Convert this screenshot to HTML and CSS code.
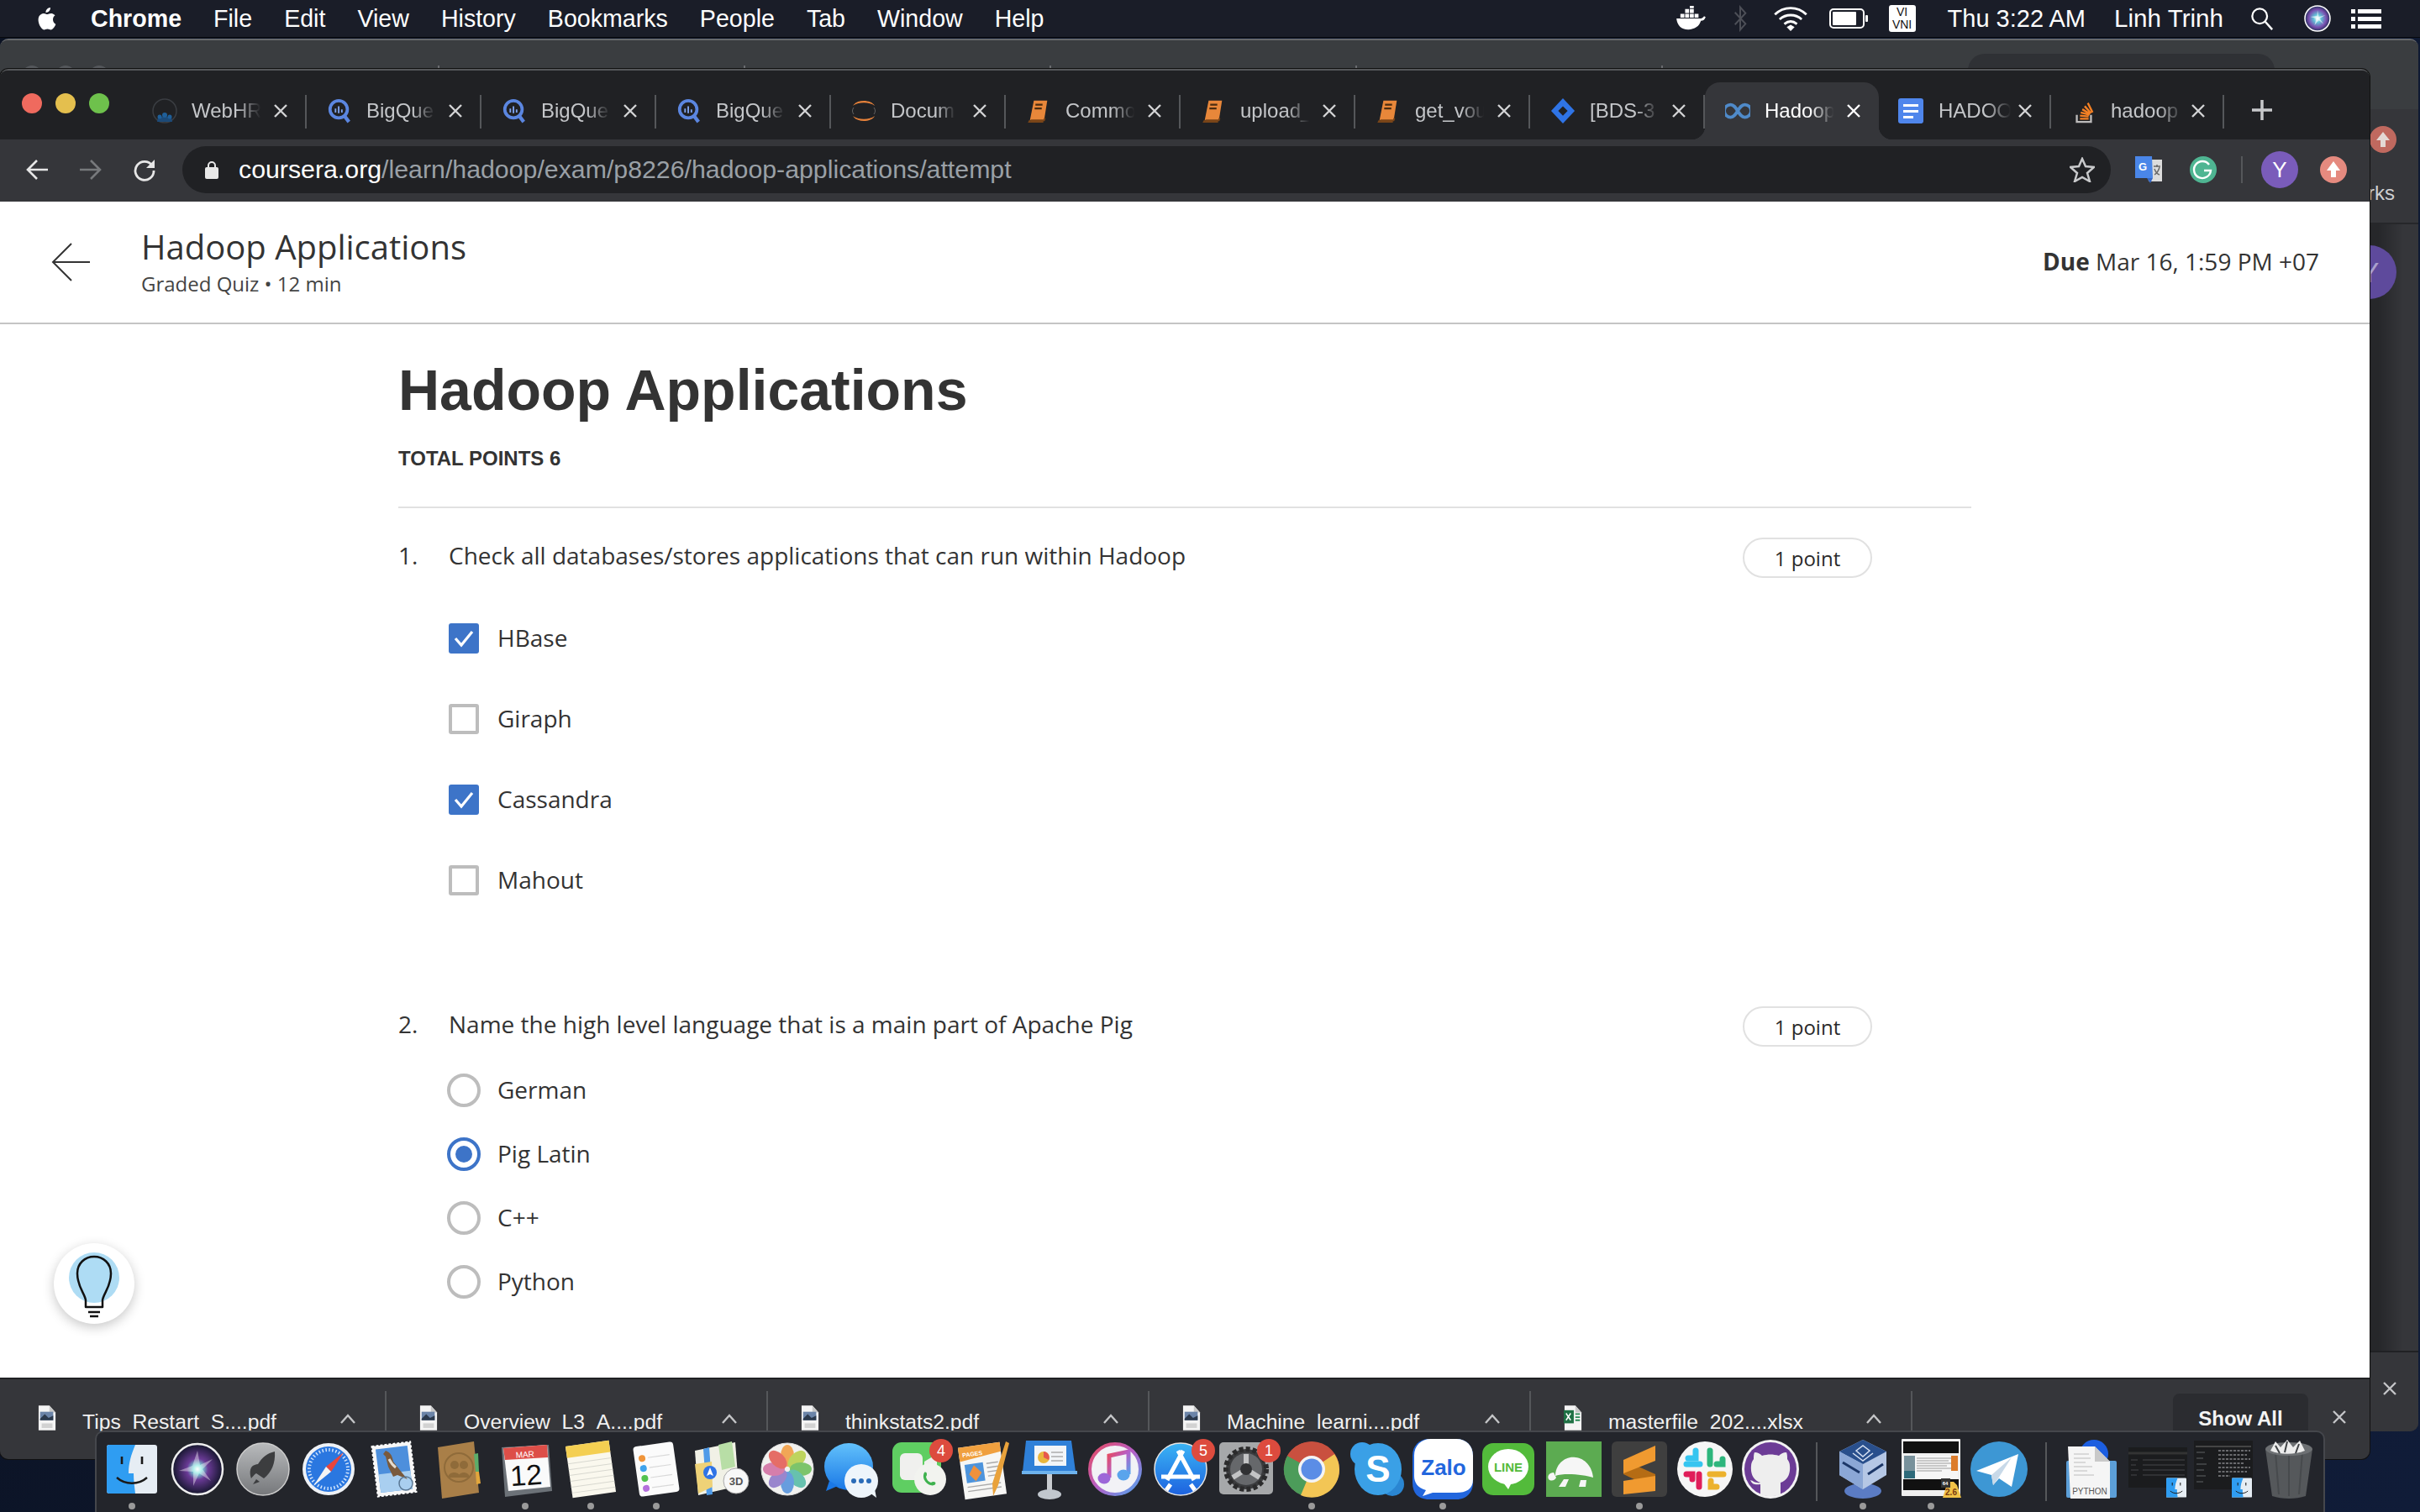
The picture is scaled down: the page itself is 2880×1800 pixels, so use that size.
FILE: index.html
```html
<!DOCTYPE html>
<html lang="en">
<head>
<meta charset="utf-8">
<title>Hadoop Applications</title>
<link rel="stylesheet" href="styles.css">
</head>
<body>
<svg class="defs" width="0" height="0" aria-hidden="true">
  <symbol id="x" viewBox="0 0 18 18"><path d="M2 2L16 16M16 2L2 16" fill="none" stroke="currentColor" stroke-width="2.4"/></symbol>
  <symbol id="bq" viewBox="0 0 30 32"><circle cx="14" cy="14" r="11" fill="none" stroke="#5b86e0" stroke-width="4"/><path d="M21 22l6 8" stroke="#5b86e0" stroke-width="4.5"/><path d="M10 13v5M14 10v9M18 14v4" stroke="#7fa3ee" stroke-width="2"/></symbol>
  <symbol id="book" viewBox="0 0 30 32"><path d="M9 3h17l-4 25H4z" fill="#e8873a"/><path d="M5 28h17l1-3M4 28l-1 2h18" fill="none" stroke="#7a4518" stroke-width="2"/><path d="M11 8h9M10 13h9" stroke="#4a2c10" stroke-width="2.4"/></symbol>
  <symbol id="pdf" viewBox="0 0 24 32"><path d="M1 0h14l8 9v23H1z" fill="#f4f4f4"/><path d="M15 0v9h8z" fill="#c9c9c9"/><rect x="3" y="8" width="17" height="11" fill="#6b84a8"/><path d="M3 17l6-6 5 5 6-3v6H3z" fill="#2c3a4d"/><path d="M5 23h14v6H5z" fill="#d2d2d2"/></symbol>
  <symbol id="finder" viewBox="0 0 60 58"><rect width="60" height="58" rx="3" fill="#e6edf4"/><path d="M3 0h31c-5 12-8 22-8 34h6c0 8 1 16 2 24H3a3 3 0 0 1-3-3V3a3 3 0 0 1 3-3z" fill="#2f9df2"/><path d="M18 14v9M42 14v9" stroke="#1a1a1a" stroke-width="2.6"/><path d="M12 39c10 9 26 9 36 0" fill="none" stroke="#1a1a1a" stroke-width="2.4"/></symbol>
</svg>

<div class="desktop">

  <header class="menubar">
    <svg class="apple" viewBox="0 0 26 30"><path d="M18 2c.3 3-2.500 6-5.500 6-.4-3 2.500-6 5.500-6zM21 16c0-3 2.300-4.500 2.500-4.700-1.500-2-3.700-2.400-4.500-2.400-2-.2-3.800 1.200-4.800 1.200s-2.500-1.200-4.200-1.200c-2.200 0-4.200 1.300-5.300 3.200-2.300 3.900-.6 9.800 1.600 13 1.100 1.600 2.400 3.300 4 3.300 1.600-.1 2.200-1 4.200-1 1.900 0 2.500 1 4.200 1s2.800-1.600 3.900-3.100c1.200-1.800 1.700-3.500 1.800-3.600-.1 0-3.400-1.300-3.400-5.700z" fill="#fff"/></svg>
    <nav class="menu">
      <span class="menu-app">Chrome</span><span>File</span><span>Edit</span><span>View</span><span>History</span><span>Bookmarks</span><span>People</span><span>Tab</span><span>Window</span><span>Help</span>
    </nav>
    <div class="status">
      <svg class="st st-docker" viewBox="0 0 38 32"><path d="M1 16h30c2 0 4-1 5-3l2 1c-1 3-3 5-6 5-2 7-8 11-16 11C7 30 2 25 1 16z" fill="#fff"/><path d="M6 10h5v5H6zM12 10h5v5h-5zM18 10h5v5h-5zM24 10h5v5h-5zM12 4h5v5h-5zM18 4h5v5h-5zM18 0h5v3h-5z" fill="#fff"/></svg>
      <svg class="st st-bt" viewBox="0 0 20 34"><path d="M3 9l14 15-7 8V2l7 8L3 25" fill="none" stroke="#4d4f57" stroke-width="2.200"/></svg>
      <svg class="st st-wifi" viewBox="0 0 44 32"><path d="M2 11c11-11 29-11 40 0M8 17c8-7 20-7 28 0M14 23c5-4 11-4 16 0" fill="none" stroke="#fff" stroke-width="3"/><path d="M17 27l5-3 5 3-5 5z" fill="#fff"/></svg>
      <svg class="st st-batt" viewBox="0 0 46 24"><rect x="1" y="1" width="40" height="22" rx="4" fill="none" stroke="#fff" stroke-width="2"/><rect x="4" y="4" width="28" height="16" rx="1" fill="#fff"/><rect x="43" y="8" width="3" height="8" rx="1" fill="#fff"/></svg>
      <div class="vi"><span>VI</span><span>VNI</span></div>
      <span class="clock">Thu 3:22 AM</span>
      <span class="user">Linh Trinh</span>
      <svg class="st st-search" viewBox="0 0 30 30"><circle cx="12" cy="12" r="9.500" fill="none" stroke="#fff" stroke-width="2.400"/><path d="M19 19l9 10" stroke="#fff" stroke-width="2.600"/></svg>
      <svg class="st st-siri" viewBox="0 0 32 32"><defs><radialGradient id="sr"><stop offset="0" stop-color="#fff"/><stop offset=".3" stop-color="#62c3d8"/><stop offset=".7" stop-color="#7a4fb0"/><stop offset="1" stop-color="#25315c"/></radialGradient></defs><circle cx="16" cy="16" r="15" fill="url(#sr)" stroke="#fff" stroke-width="1.500"/><path d="M16 6l1.500 8 8-2-7 4 5 7-6-5-5 6 2-8-7-2 8-1z" fill="#fff" opacity=".6"/></svg>
      <svg class="st st-list" viewBox="0 0 36 24"><path d="M0 1h5v5H0zM8 1h28v5H8zM0 10h5v5H0zM8 10h28v5H8zM0 19h5v5H0zM8 19h28v5H8z" fill="#fff"/></svg>
    </div>
  </header>

  <section class="win win-back">
    <div class="bk-strip">
      <div class="bk-lights"><i></i><i></i><i></i></div>
      <div class="bk-tab"></div><div class="bk-tab"></div><div class="bk-tab"></div><div class="bk-tab"></div><div class="bk-tab"></div>
      <div class="bk-active"></div>
    </div>
    <div class="bk-tool"><svg class="bk-up" viewBox="0 0 32 32"><circle cx="16" cy="16" r="16" fill="#c0695f"/><path d="M16 7l8 10h-5v8h-6v-8H8z" fill="#e4d8d4"/></svg></div>
    <div class="bk-marks"><span>Bookmarks</span></div>
    <div class="bk-page"><div class="bk-avatar">Y</div></div>
    <div class="bk-dl"><svg class="close-x bk-x"><use href="#x"/></svg></div>
  </section>

  <section class="win win-front">
    <div class="strip">
      <div class="lights"><i class="l-r"></i><i class="l-y"></i><i class="l-g"></i></div>
      <div class="tab">
        <svg class="fav" viewBox="0 0 30 30"><circle cx="15" cy="15" r="14" fill="none" stroke="#3a3d42" stroke-width="1.500"/><path d="M7 22h16l1 6H6z" fill="#1c4a78"/><circle cx="15" cy="20" r="3" fill="#1f5f99"/><circle cx="9" cy="22" r="2.500" fill="#1f5f99"/><circle cx="21" cy="22" r="2.500" fill="#1f5f99"/></svg>
        <span class="tab-t">WebHR</span><svg class="close-x"><use href="#x"/></svg>
      </div>
      <div class="tab"><svg class="fav"><use href="#bq"/></svg><span class="tab-t">BigQue</span><svg class="close-x"><use href="#x"/></svg></div>
      <div class="tab"><svg class="fav"><use href="#bq"/></svg><span class="tab-t">BigQue</span><svg class="close-x"><use href="#x"/></svg></div>
      <div class="tab"><svg class="fav"><use href="#bq"/></svg><span class="tab-t">BigQue</span><svg class="close-x"><use href="#x"/></svg></div>
      <div class="tab"><svg class="fav" viewBox="0 0 30 30"><path d="M2 9C6 1 24 1 28 9 22 4 8 4 2 9z" fill="#e5813a"/><path d="M2 21c4 8 22 8 26 0-6 5-20 5-26 0z" fill="#e5813a"/><path d="M3 11c-2 3-2 5 0 8M27 11c2 3 2 5 0 8" fill="none" stroke="#666" stroke-width="1"/></svg><span class="tab-t tab-t-n">Docum</span><svg class="close-x"><use href="#x"/></svg></div>
      <div class="tab"><svg class="fav"><use href="#book"/></svg><span class="tab-t">Commo</span><svg class="close-x"><use href="#x"/></svg></div>
      <div class="tab"><svg class="fav"><use href="#book"/></svg><span class="tab-t">upload_</span><svg class="close-x"><use href="#x"/></svg></div>
      <div class="tab"><svg class="fav"><use href="#book"/></svg><span class="tab-t">get_vou</span><svg class="close-x"><use href="#x"/></svg></div>
      <div class="tab"><svg class="fav" viewBox="0 0 30 32"><path d="M15 0l15 16-15 16L0 16z" fill="#2f74e6"/><path d="M15 10l6 6-6 6-6-6z" fill="#202124"/></svg><span class="tab-t">[BDS-3</span><svg class="close-x"><use href="#x"/></svg></div>
      <div class="tab tab-on"><svg class="fav" viewBox="0 0 32 20"><path d="M16 10c-3-5-5-8-9-8a8 8 0 0 0 0 16c4 0 6-3 9-8 3-5 5-8 9-8a8 8 0 0 1 0 16c-4 0-6-3-9-8z" fill="none" stroke="#4f8ac9" stroke-width="4"/></svg><span class="tab-t">Hadoop</span><svg class="close-x"><use href="#x"/></svg></div>
      <div class="tab tab-s tab-a"><svg class="fav" viewBox="0 0 30 30"><rect width="30" height="30" rx="3" fill="#4f86ec"/><path d="M6 7h18v3H6zM6 14h18v3H6zM6 21h12v3H6z" fill="#fff"/></svg><span class="tab-t">HADOO</span><svg class="close-x"><use href="#x"/></svg></div>
      <div class="tab tab-s tab-b"><svg class="fav" viewBox="0 0 30 32"><path d="M6 21v9h18v-9" fill="none" stroke="#bcbbbb" stroke-width="2.500"/><path d="M10 26h11M10 22l11 1M11 18l11 3M13 14l10 6M16 10l8 9M20 6l6 12" stroke="#f48024" stroke-width="2.500"/></svg><span class="tab-t">hadoop</span><svg class="close-x"><use href="#x"/></svg></div>
      <svg class="plus" viewBox="0 0 26 26"><path d="M13 1v24M1 13h24" stroke="#c8c9cb" stroke-width="3.500"/></svg>
    </div>

    <div class="toolbar">
      <svg class="nav-i" viewBox="0 0 28 28"><path d="M14 3L3 14l11 11M3 14h24" fill="none" stroke="#e6e6e6" stroke-width="2.600"/></svg>
      <svg class="nav-i nav-fwd" viewBox="0 0 28 28"><path d="M14 3l11 11-11 11M25 14H1" fill="none" stroke="#77797c" stroke-width="2.600"/></svg>
      <svg class="nav-i nav-rl" viewBox="0 0 28 28"><path d="M23 9A11 11 0 1 0 25 15" fill="none" stroke="#e6e6e6" stroke-width="2.800"/><path d="M26 2v10H16z" fill="#e6e6e6"/></svg>
      <div class="omni">
        <svg class="lock" viewBox="0 0 16 22"><path d="M4 9V6a4 4 0 0 1 8 0v3" fill="none" stroke="#e8e8e8" stroke-width="2"/><rect y="8" width="16" height="14" rx="2" fill="#e8e8e8"/></svg>
        <span class="url"><b>coursera.org</b>/learn/hadoop/exam/p8226/hadoop-applications/attempt</span>
        <svg class="star" viewBox="0 0 30 30"><path d="M15 2l4 9 10 1-8 7 3 10-9-5-9 5 3-10-8-7 10-1z" fill="none" stroke="#c8c9cb" stroke-width="2.500"/></svg>
      </div>
      <svg class="ext ext-tr" viewBox="0 0 32 32"><path d="M14 4h18v26H16z" fill="#dcdcdc"/><path d="M0 0h20l1 26H0z" fill="#4a86e8"/><path d="M14 26h7l-3 6z" fill="#3367c6"/><text x="9" y="17" class="ext-g">G</text><path d="M22 12h8M26 10v3M23 22c3-2 5-5 6-9M23 15c1 3 3 6 6 7" fill="none" stroke="#6a6a6a" stroke-width="1.500"/></svg>
      <div class="ext-c ext-gr"><svg viewBox="0 0 32 32"><path d="M23 10a10 10 0 1 0 2 7h-8" fill="none" stroke="#fff" stroke-width="2.400"/></svg></div>
      <i class="ext-sep"></i>
      <div class="avatar">Y</div>
      <div class="ext-c ext-up"><svg viewBox="0 0 32 32"><path d="M16 6l8 11h-5v8h-6v-8H8z" fill="#fff"/></svg></div>
    </div>

    <main class="page">
      <div class="page-head">
        <svg class="back" viewBox="0 0 46 46"><path d="M24 1L2 23l22 22M2 23h44" fill="none" stroke="#333" stroke-width="2"/></svg>
        <div class="head-t">
          <div class="head-title">Hadoop Applications</div>
          <div class="head-sub">Graded Quiz • 12 min</div>
        </div>
        <div class="due"><b>Due</b> Mar 16, 1:59 PM +07</div>
      </div>
      <div class="quiz">
        <h1 class="quiz-title">Hadoop Applications</h1>
        <div class="quiz-total">TOTAL POINTS 6</div>
        <hr class="quiz-rule">
        <div class="q q-1">
          <span class="q-n">1.</span><span class="q-t">Check all databases/stores applications that can run within Hadoop</span><span class="pill">1 point</span>
        </div>
        <div class="opts opts-c">
          <div class="opt"><span class="cb cb-on"><svg viewBox="0 0 36 36"><path d="M8 18l7 8 13-16" fill="none" stroke="#fff" stroke-width="3.200"/></svg></span><span class="opt-t">HBase</span></div>
          <div class="opt"><span class="cb"></span><span class="opt-t">Giraph</span></div>
          <div class="opt"><span class="cb cb-on"><svg viewBox="0 0 36 36"><path d="M8 18l7 8 13-16" fill="none" stroke="#fff" stroke-width="3.200"/></svg></span><span class="opt-t">Cassandra</span></div>
          <div class="opt"><span class="cb"></span><span class="opt-t">Mahout</span></div>
        </div>
        <div class="q q-2">
          <span class="q-n">2.</span><span class="q-t">Name the high level language that is a main part of Apache Pig</span><span class="pill">1 point</span>
        </div>
        <div class="opts opts-r">
          <div class="opt"><span class="rd"></span><span class="opt-t">German</span></div>
          <div class="opt"><span class="rd rd-on"></span><span class="opt-t">Pig Latin</span></div>
          <div class="opt"><span class="rd"></span><span class="opt-t">C++</span></div>
          <div class="opt"><span class="rd"></span><span class="opt-t">Python</span></div>
        </div>
      </div>
      <div class="bulb">
        <svg viewBox="0 0 96 96"><circle cx="48" cy="41" r="30" fill="#aedcf4"/><path d="M38 76V68c-1-8-10-16-10-32 0-12 9-20 20-20s20 8 20 20c0 16-9 24-10 32v8z" fill="none" stroke="#111" stroke-width="2.500" stroke-linejoin="round"/><path d="M41 82h14M43 87h10" stroke="#111" stroke-width="2.500"/></svg>
      </div>
    </main>

    <footer class="downloads">
      <div class="dl"><svg class="dl-i"><use href="#pdf"/></svg><span class="dl-t">Tips_Restart_S....pdf</span><svg class="caret" viewBox="0 0 18 12"><path d="M1 11l8-9 8 9" fill="none" stroke="#c4c5c7" stroke-width="2.400"/></svg></div>
      <div class="dl"><svg class="dl-i"><use href="#pdf"/></svg><span class="dl-t">Overview_L3_A....pdf</span><svg class="caret" viewBox="0 0 18 12"><path d="M1 11l8-9 8 9" fill="none" stroke="#c4c5c7" stroke-width="2.400"/></svg></div>
      <div class="dl"><svg class="dl-i"><use href="#pdf"/></svg><span class="dl-t">thinkstats2.pdf</span><svg class="caret" viewBox="0 0 18 12"><path d="M1 11l8-9 8 9" fill="none" stroke="#c4c5c7" stroke-width="2.400"/></svg></div>
      <div class="dl"><svg class="dl-i"><use href="#pdf"/></svg><span class="dl-t">Machine_learni....pdf</span><svg class="caret" viewBox="0 0 18 12"><path d="M1 11l8-9 8 9" fill="none" stroke="#c4c5c7" stroke-width="2.400"/></svg></div>
      <div class="dl"><svg class="dl-i" viewBox="0 0 24 32"><path d="M1 0h14l8 9v23H1z" fill="#f4f4f4"/><path d="M15 0v9h8z" fill="#c9c9c9"/><rect y="6" width="13" height="17" fill="#1f7145"/><path d="M3 10l6 9M9 10l-6 9" stroke="#fff" stroke-width="1.600"/><path d="M15 11h6M15 15h6M15 19h6" stroke="#2a8a55" stroke-width="2"/></svg><span class="dl-t">masterfile_202....xlsx</span><svg class="caret" viewBox="0 0 18 12"><path d="M1 11l8-9 8 9" fill="none" stroke="#c4c5c7" stroke-width="2.400"/></svg></div>
      <div class="show-all">Show All</div>
      <svg class="close-x dl-x"><use href="#x"/></svg>
    </footer>
  </section>

  <aside class="dock">
    <div class="di on"><svg class="ic" viewBox="0 0 72 72"><use href="#finder" x="6" y="7" width="60" height="58"/></svg></div>
    <div class="di"><svg class="ic" viewBox="0 0 72 72"><defs><radialGradient id="sg"><stop offset="0" stop-color="#fff"/><stop offset=".16" stop-color="#7fe6e0"/><stop offset=".42" stop-color="#6a3a96"/><stop offset="1" stop-color="#14162c"/></radialGradient></defs><circle cx="36" cy="36" r="30" fill="url(#sg)" stroke="#eee" stroke-width="2.500"/><path d="M36 14l3 17 15-7-12 12 10 14-14-9-7 15 0-17-17-1 16-6z" fill="#fff" opacity=".4"/></svg></div>
    <div class="di"><svg class="ic" viewBox="0 0 72 72"><defs><linearGradient id="lg" x1="0" y1="0" x2="0" y2="1"><stop offset="0" stop-color="#b8babc"/><stop offset="1" stop-color="#76787b"/></linearGradient></defs><circle cx="36" cy="36" r="31" fill="url(#lg)" stroke="#ccc" stroke-width="1.500"/><path d="M50 15c1 14-4 25-13 32l-9-6c-2 1-6 6-6 6s-3-7 0-13c2-3 6-4 8-4 5-8 11-13 20-15z" fill="#3c3d3f"/><path d="M28 48l-4 6 8-3z" fill="#3c3d3f"/></svg></div>
    <div class="di"><svg class="ic" viewBox="0 0 72 72"><circle cx="36" cy="36" r="31" fill="#eef1f5"/><circle cx="36" cy="36" r="27" fill="#2a77e0"/><circle cx="36" cy="36" r="23" fill="none" stroke="#cfe3fb" stroke-width="4" stroke-dasharray="1.500 2.500"/><path d="M54 16L33 33l6 6z" fill="#e8453c"/><path d="M18 56l15-23 6 6z" fill="#f4f4f4"/></svg></div>
    <div class="di"><svg class="ic" viewBox="0 0 72 72"><g transform="rotate(-7 36 36)"><rect x="13" y="6" width="46" height="60" fill="#f6f6f6" stroke="#fff" stroke-width="2" stroke-dasharray="3 2"/><rect x="17" y="10" width="38" height="52" fill="#4d8fdc"/><rect x="17" y="40" width="38" height="22" fill="#a9cff0"/></g><path d="M26 14c6 2 8 7 9 13l11 14 6 7-12-5-5 2-6-12-3-12-3-3z" fill="#7a5a3c"/><path d="M30 24c2 4 4 7 8 10" stroke="#e4dccf" stroke-width="3" fill="none"/><circle cx="50" cy="53" r="8" fill="none" stroke="#5a7894" stroke-width="1.500"/></svg></div>
    <div class="di"><svg class="ic" viewBox="0 0 72 72"><path d="M10 10l43-7 6 61-44 7z" fill="#a97f48"/><path d="M53 18l5-1 1 22-4 0z" fill="#5cad6a"/><path d="M55 39l4 0 2 14-5 1z" fill="#e2a63c"/><circle cx="35" cy="34" r="17" fill="none" stroke="#8f6b3a" stroke-width="2"/><circle cx="30" cy="31" r="5" fill="#8f6b3a"/><circle cx="41" cy="31" r="5" fill="#8f6b3a"/><path d="M22 46c1-8 14-8 15 0M34 46c1-8 13-8 14 0" fill="#8f6b3a"/></svg></div>
    <div class="di on"><svg class="ic" viewBox="0 0 72 72"><path d="M8 10l56-3 4 55-56 7z" fill="#6c7278"/><path d="M10 11l52-4 4 50-50 5z" fill="#fafafa"/><path d="M10 11l52-4 1 15-51 3z" fill="#dd4e48"/><text x="36" y="22" class="cal-m" transform="rotate(-4 36 22)">MAR</text><text x="38" y="55" class="cal-d" transform="rotate(-4 38 55)">12</text></svg></div>
    <div class="di on"><svg class="ic" viewBox="0 0 72 72"><g transform="rotate(-8 36 36)"><rect x="10" y="5" width="52" height="62" fill="#faf8ee"/><rect x="10" y="5" width="52" height="14" fill="#f4cf52"/><path d="M10 26h52M10 33h52M10 40h52M10 47h52M10 54h52M10 61h52" stroke="#d8d8d0" stroke-width="1"/></g></svg></div>
    <div class="di on"><svg class="ic" viewBox="0 0 72 72"><g transform="rotate(-8 36 36)"><rect x="12" y="6" width="48" height="60" rx="4" fill="#fbfbfb"/><circle cx="21" cy="21" r="4" fill="#f0953a"/><circle cx="21" cy="33" r="4" fill="#3fa3ec"/><circle cx="21" cy="45" r="4" fill="#53c24f"/><circle cx="21" cy="57" r="4" fill="#b46fdc"/><path d="M28 21h26M28 33h26M28 45h26M28 57h26" stroke="#d9d9d9" stroke-width="1.200"/></g></svg></div>
    <div class="di"><svg class="ic" viewBox="0 0 72 72"><path d="M4 14l48-10 4 52-48 11z" fill="#f1f1e6"/><path d="M32 7l16-4 4 30-16 4z" fill="#b8dea6"/><path d="M14 12l7-2 4 56-7 1z" fill="#4f9be8"/><path d="M4 30l20-3 1 30-17 8z" fill="#eed277"/><circle cx="22" cy="40" r="8" fill="#2f74e6"/><path d="M22 34l4 10-4-2-4 2z" fill="#fff"/><circle cx="53" cy="50" r="15" fill="#f8f8f8" stroke="#a9a9a9"/><text x="53" y="55" class="map-t">3D</text></svg></div>
    <div class="di"><svg class="ic" viewBox="0 0 72 72"><circle cx="36" cy="36" r="31" fill="#f1f1ef" stroke="#ddd"/><g opacity=".85"><ellipse cx="36" cy="20" rx="8" ry="13" fill="#f29a3c"/><ellipse cx="36" cy="20" rx="8" ry="13" fill="#b6cf45" transform="rotate(45 36 36)"/><ellipse cx="36" cy="20" rx="8" ry="13" fill="#68bd55" transform="rotate(90 36 36)"/><ellipse cx="36" cy="20" rx="8" ry="13" fill="#4fb9a3" transform="rotate(135 36 36)"/><ellipse cx="36" cy="20" rx="8" ry="13" fill="#4f8fdc" transform="rotate(180 36 36)"/><ellipse cx="36" cy="20" rx="8" ry="13" fill="#8a74c8" transform="rotate(225 36 36)"/><ellipse cx="36" cy="20" rx="8" ry="13" fill="#d16aa0" transform="rotate(270 36 36)"/><ellipse cx="36" cy="20" rx="8" ry="13" fill="#e4574f" transform="rotate(315 36 36)"/></g></svg></div>
    <div class="di"><svg class="ic" viewBox="0 0 72 72"><defs><linearGradient id="mg" x1="0" y1="0" x2="0" y2="1"><stop offset="0" stop-color="#62c1fb"/><stop offset="1" stop-color="#1a78e6"/></linearGradient></defs><ellipse cx="31" cy="33" rx="29" ry="28" fill="url(#mg)"/><path d="M8 50l-4 12 14-6z" fill="#1a78e6"/><ellipse cx="46" cy="50" rx="20" ry="20" fill="#eef5fb"/><path d="M56 64l8 6-2-10z" fill="#eef5fb"/><circle cx="37" cy="50" r="3" fill="#2b6cb8"/><circle cx="46" cy="50" r="3" fill="#2b6cb8"/><circle cx="55" cy="50" r="3" fill="#2b6cb8"/></svg></div>
    <div class="di"><svg class="ic" viewBox="0 0 72 72"><rect x="5" y="4" width="58" height="60" rx="11" fill="#5fce62"/><rect x="14" y="17" width="27" height="32" rx="6" fill="#f0f0ee"/><path d="M43 27l15-9v32l-15-9z" fill="#f0f0ee"/><circle cx="50" cy="48" r="19" fill="#f2f3ef"/><path d="M43 40c3-2 4 3 2 5 1 4 3 6 6 7 2-2 7-1 5 2-4 5-18-4-13-14z" fill="#3fb24f"/></svg><b class="badge">4</b></div>
    <div class="di"><svg class="ic" viewBox="0 0 72 72"><g transform="rotate(-8 34 38)"><rect x="9" y="7" width="50" height="62" fill="#f7f7f5"/><path d="M9 7h50v11L9 24z" fill="#f0a03f"/><text x="13" y="19" class="pg-t">PAGES</text><rect x="14" y="28" width="22" height="22" fill="#4d94dc"/><path d="M25 30l8 10-8 9-7-9z" fill="#f0913c"/><path d="M40 30h14M40 35h14M40 40h14M40 45h14M14 55h40M14 60h40" stroke="#aaa" stroke-width="1.400"/></g><path d="M62 3l4 2-13 50-6 13-1-15z" fill="#e9a23b"/></svg></div>
    <div class="di"><svg class="ic" viewBox="0 0 72 72"><path d="M8 2h54l5 37H4z" fill="#2f80d8"/><rect x="3" y="38" width="66" height="4" fill="#6db2ec"/><rect x="18" y="8" width="38" height="24" fill="#f2f5f8"/><circle cx="29" cy="22" r="7" fill="#e9b63c"/><path d="M29 22V15a7 7 0 0 1 6 10z" fill="#e6574e"/><path d="M38 16h14M38 21h14M38 26h14" stroke="#888" stroke-width="1.200"/><rect x="33" y="42" width="6" height="20" fill="#c9ccd0"/><ellipse cx="36" cy="66" rx="14" ry="6" fill="#c1c7ce"/></svg></div>
    <div class="di"><svg class="ic" viewBox="0 0 72 72"><defs><linearGradient id="it" x1="0" y1="0" x2="1" y2="1"><stop offset="0" stop-color="#e84a5f"/><stop offset=".5" stop-color="#b65fc7"/><stop offset="1" stop-color="#4ea8ef"/></linearGradient></defs><circle cx="36" cy="36" r="30" fill="#f2f2f6" stroke="url(#it)" stroke-width="4"/><path d="M29 46V20l23-5v27" fill="none" stroke="url(#it)" stroke-width="5"/><ellipse cx="23" cy="47" rx="7.500" ry="6.500" fill="#9d67d8"/><ellipse cx="46" cy="43" rx="7.500" ry="6.500" fill="#5aa4ec"/></svg></div>
    <div class="di"><svg class="ic" viewBox="0 0 72 72"><defs><linearGradient id="as" x1="0" y1="0" x2="0" y2="1"><stop offset="0" stop-color="#3ab4f5"/><stop offset="1" stop-color="#1d62df"/></linearGradient></defs><circle cx="36" cy="36" r="31" fill="url(#as)" stroke="#e5e5e5" stroke-width="1.500"/><path d="M39 14L20 49M33 14l19 35M13 45h46M24 54l-5 7M48 54l5 7" fill="none" stroke="#fff" stroke-width="5"/></svg><b class="badge">5</b></div>
    <div class="di"><svg class="ic" viewBox="0 0 72 72"><rect x="4" y="4" width="64" height="62" rx="5" fill="#a6a8aa"/><circle cx="36" cy="36" r="24" fill="#3b3c3e" stroke="#2b2b2c" stroke-width="6" stroke-dasharray="5 3"/><circle cx="36" cy="36" r="19" fill="#66686b"/><path d="M36 36V18M36 36L20 46M36 36l16 10" stroke="#c3c4c5" stroke-width="6"/><circle cx="36" cy="36" r="7" fill="#303133"/></svg><b class="badge">1</b></div>
    <div class="di on"><svg class="ic" viewBox="0 0 72 72"><circle cx="36" cy="36" r="33" fill="#c9503f"/><path d="M36 36L7 20A33 33 0 0 0 24 67z" fill="#4c9c5a"/><path d="M36 36l-13 31A33 33 0 0 0 69 36 33 33 0 0 0 63 18z" fill="#f3c655"/><path d="M36 36L63 18A33 33 0 0 0 7 20z" fill="#c9503f"/><circle cx="36" cy="36" r="16" fill="#f4f4f4"/><circle cx="36" cy="36" r="12.500" fill="#5b8de6"/></svg></div>
    <div class="di"><svg class="ic" viewBox="0 0 72 72"><circle cx="18" cy="18" r="14" fill="#3a9fe8"/><circle cx="54" cy="54" r="14" fill="#2a86d2"/><ellipse cx="37" cy="36" rx="28" ry="31" fill="#3aa0e6"/><text x="37" y="51" class="sk-t">S</text></svg></div>
    <div class="di on"><svg class="ic ic-lg" viewBox="0 0 72 72"><path d="M20 0h32c12 0 20 8 20 20v32c0 12-8 20-20 20H20C8 72 0 66 0 52V20C0 8 8 0 20 0z" fill="#2266dd"/><path d="M22 0h30c12 0 20 8 20 20v28c0 12-8 16-20 16H24l-12 4 4-7C6 58 2 52 2 44V20C2 8 10 0 22 0z" fill="#fff"/><text x="37" y="43" class="za-t">Zalo</text></svg></div>
    <div class="di"><svg class="ic" viewBox="0 0 72 72"><rect x="5" y="5" width="62" height="62" rx="13" fill="#53bb3b"/><ellipse cx="36" cy="33" rx="24" ry="21" fill="#fff"/><path d="M30 52l6 8 4-8z" fill="#fff"/><text x="36" y="39" class="ln-t">LINE</text></svg></div>
    <div class="di"><svg class="ic" viewBox="0 0 72 72"><rect x="3" y="3" width="66" height="66" fill="#5cab51"/><path d="M14 44c0-14 12-24 24-22 11 1 20 11 21 24-10-3-33-6-45-2z" fill="#f6f6f6"/><path d="M12 40c-5 0-8 4-6 8 3 3 8 1 9-2zM24 48l-6 9h8l4-9zM44 49l-2 8h8l1-8z" fill="#f6f6f6"/></svg></div>
    <div class="di on"><svg class="ic" viewBox="0 0 72 72"><rect x="3" y="3" width="66" height="66" rx="6" fill="#3f3f3f"/><path d="M17 25l38 17v18L17 42z" fill="#b56c14"/><path d="M55 8v18L17 41V25z" fill="#f09a30"/><path d="M55 44v18L17 66V50z" fill="#f09a30"/></svg></div>
    <div class="di"><svg class="ic" viewBox="0 0 72 72"><circle cx="36" cy="36" r="33" fill="#f6f6f6"/><g fill="none" stroke-width="7" stroke-linecap="round"><path d="M25 14v9h-9" stroke="#36c5f0"/><path d="M14 30h16" stroke="#36c5f0"/><path d="M42 14v16" stroke="#2eb67d"/><path d="M57 24v6h-7" stroke="#2eb67d"/><path d="M29 57V42" stroke="#e01e5a"/><path d="M14 42h7v6" stroke="#e01e5a"/><path d="M42 42h16" stroke="#ecb22e"/><path d="M43 50v7h7" stroke="#ecb22e"/></g></svg></div>
    <div class="di"><svg class="ic ic-lg" viewBox="0 0 72 72"><ellipse cx="36" cy="36" rx="34" ry="35" fill="#f2f2f2"/><ellipse cx="36" cy="36" rx="31" ry="32" fill="#6c3c96"/><path d="M24 66V54c-6 1-10 0-12-5 4 1 6 4 12 3-8-3-12-10-11-20 0-3 1-5 3-8 0-3 0-6 1-8 4 0 7 2 9 4 7-2 13-2 20 0 2-2 5-4 9-4 1 2 1 5 1 8 2 3 3 5 3 8 1 10-3 17-11 20v14c-8 3-16 3-24 0z" fill="#eee"/></svg></div>
    <i class="dk-sep"></i>
    <div class="di on"><svg class="ic" viewBox="0 0 72 72"><ellipse cx="36" cy="62" rx="22" ry="9" fill="#5b7cc4"/><path d="M36 1l28 14v28L36 60 8 43V15z" fill="#b5c7e5"/><path d="M36 1l28 14-28 15L8 15z" fill="#294f8c"/><path d="M36 30v30L8 43V15z" fill="#8ba7d6"/><path d="M28 14l8-6 8 6-8 7zM24 17l12 9 12-9" fill="none" stroke="#d5e0f2" stroke-width="1.500"/><path d="M12 28l20 12M42 42l18-12" stroke="#1c3768" stroke-width="3"/></svg></div>
    <div class="di di-w on"><svg class="ic ic-shot" viewBox="0 0 72 72"><rect x="1" y="0" width="70" height="68" rx="1" fill="#efefef"/><rect x="3" y="3" width="66" height="14" fill="#111"/><rect x="3" y="48" width="66" height="13" fill="#111"/><rect x="4" y="20" width="64" height="27" fill="#f6f6f6"/><rect x="4" y="20" width="13" height="27" fill="#78919b"/><rect x="4" y="38" width="13" height="9" fill="#2e6a7a"/><path d="M19 23h44M19 26h38M19 29h42M19 32h36M19 35h44M19 38h30" stroke="#9a9a9a" stroke-width="1"/><rect x="60" y="20" width="8" height="18" fill="#dc7c2c"/><path d="M50 70l5-16 4-3h4l4 4 5 15z" fill="#f1c248"/><rect x="48" y="47" width="11" height="11" fill="#333"/><text x="53" y="55" class="sh-a">64</text><text x="60" y="67" class="sh-b">2.6</text></svg></div>
    <div class="di"><svg class="ic" viewBox="0 0 72 72"><ellipse cx="36" cy="36" rx="34" ry="33" fill="#3d97d4"/><path d="M9 38l50-20-8 39-15-10-7 8-2-12z" fill="#fff"/><path d="M27 43l24-21-16 25-6 8z" fill="#c8d9e8"/></svg></div>
    <i class="dk-sep dk-sep2"></i>
    <div class="di"><svg class="ic" viewBox="0 0 72 72"><circle cx="38" cy="18" r="17" fill="#1c5ee0"/><rect x="5" y="26" width="60" height="44" rx="2" fill="#5c9fd8"/><path d="M7 9h32l18 18v44H10z" fill="#f5f5f5"/><path d="M39 9v18h18z" fill="#c9c9c9"/><path d="M14 18h18M14 23h20M14 28h14M14 33h22M14 38h16M14 43h24" stroke="#bdbdbd" stroke-width="1.200"/><text x="33" y="66" class="py-t">PYTHON</text></svg></div>
    <div class="di"><svg class="ic" viewBox="0 0 72 72"><rect x="1" y="10" width="70" height="48" fill="#1b1c1e"/><path d="M1 17h70" stroke="#333" stroke-width="3"/><path d="M18 25h50M18 31h50M18 37h50M18 43h50M4 25h8M4 31h6M4 37h9M4 43h7" stroke="#38393c" stroke-width="1.500"/><use href="#finder" x="46" y="46" width="24" height="24"/></svg></div>
    <div class="di"><svg class="ic" viewBox="0 0 72 72"><rect x="1" y="2" width="70" height="58" fill="#1b1c1e"/><path d="M3 9h66" stroke="#444" stroke-width="2"/><path d="M4 16h10M4 23h8M4 30h12M4 37h9M4 44h11M4 51h8" stroke="#4a4b4e" stroke-width="1.500"/><path d="M30 14h38M30 19h34M30 24h38M30 29h30M30 34h38M30 39h34M30 44h14" stroke="#6a6b6e" stroke-width="2" stroke-dasharray="3 1.500"/><use href="#finder" x="46" y="46" width="24" height="24"/></svg></div>
    <div class="di"><svg class="ic" viewBox="0 0 72 72"><path d="M8 12h56l-8 56c-12 4-28 4-40 0z" fill="#55585b"/><path d="M20 16l4 50M36 16v52M52 16l-4 50" stroke="#474a4d" stroke-width="2"/><ellipse cx="36" cy="12" rx="28" ry="8" fill="#6d7073"/><path d="M14 14l6-11 6 7 8-9 7 9 8-8 6 12c-12 5-30 5-41 0z" fill="#ececec"/><path d="M20 8l5 9M34 3l-3 13M48 6l-4 11" stroke="#3f4245" stroke-width="2"/></svg></div>
  </aside>
</div>
</body>
</html>
```
FILE: styles.css
```css
* { box-sizing: border-box; }
html, body { margin: 0; padding: 0; width: 2880px; height: 1800px; overflow: hidden; }
body { font-family: "Liberation Sans", Arial, sans-serif; background: #0d1526; }
.defs { position: absolute; }
.desktop { position: relative; width: 2880px; height: 1800px; overflow: hidden; background: linear-gradient(120deg, #0b1222, #101c38); }

/* menu bar */
.menubar { height: 45px; background: #1a1d28; color: #fff; display: flex; align-items: center; font-size: 28.6px; border-bottom: 1px solid #08090d; }
.apple { width: 26px; height: 30px; margin-left: 42px; flex: none; }
.menu { display: flex; gap: 38px; margin-left: 40px; white-space: nowrap; }
.menu-app { font-weight: 700; }
.status { margin-left: auto; display: flex; align-items: center; white-space: nowrap; }
.st { flex: none; display: block; }
.st-docker { width: 38px; height: 30px; margin-right: 31px; }
.st-bt { width: 18px; height: 32px; margin-right: 30px; }
.st-wifi { width: 42px; height: 30px; margin-right: 25px; }
.st-batt { width: 46px; height: 24px; margin-right: 25px; }
.vi { width: 32px; height: 32px; background: #fff; border-radius: 3px; color: #111; font-size: 14px; line-height: 15px; display: flex; flex-direction: column; align-items: center; font-weight: 400; padding-top: 1px; margin-right: 38px; }
.clock { margin-right: 34px; font-size: 29px; }
.user { margin-right: 32px; font-size: 29.6px; }
.st-search { width: 28px; height: 28px; margin-right: 36px; }
.st-siri { width: 32px; height: 32px; margin-right: 24px; }
.st-list { width: 36px; height: 24px; margin-right: 46px; }

/* windows on the desktop */
.win { position: absolute; left: 0; display: flex; flex-direction: column; overflow: hidden; }
.win-back { top: 46px; width: 2878px; height: 1658px; background: #35363a; border-top: 2px solid #66686b; border-radius: 10px; }
.win-front { top: 82px; width: 2820px; height: 1655px; background: #202124; border-top: 2px solid #55575a; border-radius: 10px; box-shadow: 0 0 0 1px #111; }

/* back window */
.bk-strip { height: 82px; flex: none; display: flex; align-items: flex-end; background: #3a3d40; }
.bk-lights { width: 159px; height: 52px; display: flex; gap: 16px; padding-left: 26px; }
.bk-lights i { width: 24px; height: 24px; border-radius: 50%; background: #55585c; }
.bk-tab { width: 364px; height: 52px; border-right: 2px solid #6a6c70; }
.bk-active { width: 365px; height: 66px; margin-left: 363px; background: #2f3135; border-radius: 20px 20px 0 0; }
.bk-tool { height: 72px; flex: none; display: flex; align-items: center; justify-content: flex-end; padding-right: 26px; background: #35363a; }
.bk-up { width: 32px; height: 32px; }
.bk-marks { height: 65px; flex: none; display: flex; justify-content: flex-end; align-items: flex-start; padding: 14px 28px 0 0; line-height: 28px; color: #cfd0d2; font-size: 24px; background: #35363a; border-bottom: 2px solid #26272a; }
.bk-page { flex: 1; background: linear-gradient(90deg, #26272a 2830px, #35363a 2860px); padding-top: 25px; display: flex; justify-content: flex-end; padding-right: 26px; }
.bk-avatar { width: 64px; height: 64px; border-radius: 50%; background: #5e4a9c; color: #a9a0cc; font-size: 34px; line-height: 64px; text-align: center; }
.bk-dl { height: 96px; flex: none; background: #35363a; display: flex; justify-content: flex-end; align-items: flex-start; padding: 34px 25px 0 0; border-top: 2px solid #202124; }
.bk-x { color: #c4c5c7; }

/* tab strip */
.strip { height: 82px; flex: none; display: flex; align-items: flex-end; background: #202124; }
.lights { width: 157px; height: 68px; flex: none; display: flex; gap: 16px; align-items: center; padding: 0 0 18px 26px; }
.lights i { width: 24px; height: 24px; border-radius: 50%; }
.l-r { background: #ef6a5e; }
.l-y { background: #e4bf4e; }
.l-g { background: #6ec14c; }
.tab { position: relative; width: 208px; height: 68px; flex: none; display: flex; align-items: center; padding-left: 24px; color: #c4c6c9; font-size: 24px; }
.tab::after { content: ""; position: absolute; right: 0; top: 15px; width: 2px; height: 40px; background: #55575a; }
.fav { width: 30px; height: 30px; flex: none; margin-right: 17px; }
.tab-t { width: 84px; overflow: hidden; white-space: nowrap; flex: none; -webkit-mask-image: linear-gradient(90deg, #000 65%, transparent 98%); mask-image: linear-gradient(90deg, #000 65%, transparent 98%); }
.tab-t-n { -webkit-mask-image: linear-gradient(90deg, #000 66%, transparent 92%); mask-image: linear-gradient(90deg, #000 66%, transparent 92%); }
.close-x { width: 18px; height: 18px; flex: none; display: block; }
.tab .close-x { margin-left: 13px; color: #d2d3d5; }
.tab-on { width: 207px; background: #35363a; color: #fff; border-radius: 18px 18px 0 0; z-index: 1; }
.tab-on .close-x { color: #fff; }
.tab-on::after { top: auto; right: -16px; bottom: 0; width: 16px; height: 16px; background: radial-gradient(circle at 100% 0, transparent 16px, #35363a 16.500px); }
.tab-on::before { content: ""; position: absolute; left: -16px; bottom: 0; width: 16px; height: 16px; background: radial-gradient(circle at 0 0, transparent 16px, #35363a 16.500px); }
.tab-a { width: 205px; padding-left: 23px; }
.tab-b { width: 206px; }
.tab-s .tab-t { width: 88px; }
.tab-a .fav { margin-right: 18px; }
.tab-s .close-x { margin-left: 6px; }
.tab-b .close-x { margin-left: 7px; }
.plus { width: 26px; height: 26px; flex: none; margin: 0 0 22px 32px; }

/* toolbar */
.toolbar { height: 74px; flex: none; background: #35363a; display: flex; align-items: center; padding: 0 0 2px 30px; }
.nav-i { width: 28px; height: 28px; flex: none; }
.nav-fwd { margin-left: 36px; }
.nav-rl { margin-left: 36px; }
.omni { width: 2295px; height: 56px; margin-left: 31px; background: #202124; border-radius: 28px; display: flex; align-items: center; padding-left: 27px; flex: none; }
.lock { width: 16px; height: 22px; flex: none; }
.url { margin-left: 24px; font-size: 30.3px; color: #9aa0a6; white-space: nowrap; }
.url b { font-weight: 400; color: #fff; }
.star { width: 30px; height: 30px; margin-left: auto; margin-right: 19px; flex: none; }
.ext { width: 32px; height: 32px; flex: none; }
.ext-tr { margin-left: 29px; }
.ext-g { fill: #fff; font: 700 13px "Liberation Sans", sans-serif; text-anchor: middle; }
.ext-c { width: 32px; height: 32px; border-radius: 50%; flex: none; }
.ext-c svg { display: block; width: 32px; height: 32px; }
.ext-gr { background: #4fb592; margin-left: 33px; }
.ext-sep { width: 2px; height: 32px; background: #55575a; margin-left: 29px; flex: none; }
.avatar { width: 44px; height: 44px; border-radius: 50%; background: #7a5cba; color: #fff; font-size: 26px; line-height: 44px; text-align: center; margin-left: 22px; flex: none; }
.ext-up { background: #e58a7f; margin-left: 26px; }

/* page */
.page { position: relative; flex: 1; min-height: 0; background: #fff; color: #333; font-family: "Open Sans", sans-serif; overflow: hidden; }
.page-head { height: 146px; border-bottom: 2px solid #c4c4c4; display: flex; align-items: flex-start; }
.back { width: 46px; height: 46px; margin: 49px 0 0 61px; flex: none; }
.head-t { margin: 27px 0 0 61px; }
.head-title { font-size: 40px; line-height: 54px; color: #333; }
.head-sub { font-size: 24px; line-height: 33px; color: #444; }
.due { margin: 51px 60px 0 auto; font-size: 28px; line-height: 40px; }
.due b { font-weight: 700; }
.quiz { width: 1872px; margin-left: 474px; padding-top: 38px; }
.quiz-title { margin: 0; font: 700 68px/80px "Liberation Sans", Arial, sans-serif; color: #333; }
.quiz-total { margin-top: 27px; font: 700 24px/30px "Liberation Sans", Arial, sans-serif; color: #333; }
.quiz-rule { margin: 42px 0 0; height: 2px; border: 0; background: #e1e1e1; }
.q { display: flex; align-items: flex-start; font-size: 28px; line-height: 42px; padding-right: 118px; }
.q-1 { margin-top: 35px; }
.q-2 { margin-top: 132px; }
.q-n { width: 60px; flex: none; }
.q-t { flex: 1; }
.pill { width: 154px; height: 48px; flex: none; border: 2px solid #e1e1e1; border-radius: 24px; font-size: 24px; line-height: 46px; text-align: center; color: #2a2a2a; }
.opts { display: flex; flex-direction: column; font-size: 28px; }
.opts-c { margin: 54px 0 0 60px; gap: 60px; }
.opts-r { margin: 32px 0 0 58px; gap: 36px; }
.opt { display: flex; align-items: center; }
.opt-t { padding-bottom: 2px; }
.opts-c .opt { height: 36px; gap: 22px; }
.opts-r .opt { height: 40px; gap: 20px; }
.cb { width: 36px; height: 36px; flex: none; border: 4px solid #bdbdbd; border-radius: 3px; }
.cb-on { background: #3d74c8; border: 0; }
.cb svg { display: block; width: 36px; height: 36px; }
.rd { width: 40px; height: 40px; flex: none; border: 4px solid #bdbdbd; border-radius: 50%; }
.rd-on { border-color: #3d74c8; padding: 6px; background: #3d74c8; background-clip: content-box; }
.bulb { position: absolute; left: 64px; top: 1240px; width: 96px; height: 96px; border-radius: 50%; background: #fff; box-shadow: 0 4px 14px rgba(0,0,0,.22); }
.bulb svg { display: block; width: 96px; height: 96px; }

/* downloads */
.downloads { height: 97px; flex: none; background: #35363a; display: flex; padding: 14px 27px 0 6px; color: #f1f1f1; font-size: 24.7px; border-top: 2px solid #202124; }
.dl { width: 454px; height: 83px; flex: none; display: flex; align-items: flex-start; border-right: 2px solid #55575a; padding: 17px 35px 0 39px; }
.dl-i { width: 22px; height: 30px; flex: none; }
.dl-t { margin: 4px 0 0 31px; line-height: 32px; white-space: nowrap; }
.caret { width: 18px; height: 12px; flex: none; margin: 10px 0 0 auto; }
.show-all { width: 161px; height: 62px; margin: 3px 0 0 auto; background: #2b2c30; border-radius: 8px; text-align: center; line-height: 60px; font-size: 24px; font-weight: 700; color: #f4f4f4; flex: none; }
.dl-x { margin: 22px 0 0 28px; color: #c4c5c7; }

/* dock */
.dock { position: absolute; left: 113px; top: 1703px; width: 2654px; height: 97px; background: #23252b; border: 2px solid #45474c; border-bottom: 0; border-radius: 10px 10px 0 0; display: flex; padding-left: 3px; }
.di { position: relative; width: 78px; height: 95px; flex: none; display: flex; justify-content: center; padding-top: 8px; }
.di-w { width: 84px; }
.ic { width: 72px; height: 72px; display: block; flex: none; overflow: visible; }
.on::after { content: ""; position: absolute; left: 35px; top: 84px; width: 8px; height: 8px; border-radius: 50%; background: #9a9a9a; }
.di-w.on::after { left: 38px; }
.dk-sep { width: 2px; height: 70px; background: #55575a; flex: none; margin: 12px 15px 0 15px; }
.dk-sep2 { margin: 12px 15px 0 16px; }
.badge { position: absolute; left: 52px; top: 8px; width: 28px; height: 28px; border-radius: 50%; background: #dd4b3e; color: #fff; font: 400 18px/28px "Liberation Sans", sans-serif; text-align: center; }
.cal-m { fill: #fff; font: 400 10px "Liberation Sans", sans-serif; text-anchor: middle; }
.cal-d { fill: #111; font: 400 34px "Liberation Sans", sans-serif; text-anchor: middle; }
.map-t { fill: #555; font: 700 13px "Liberation Sans", sans-serif; text-anchor: middle; }
.pg-t { fill: #fff; font: 700 7px "Liberation Sans", sans-serif; }
.sk-t { fill: #fff; font: 700 44px "Liberation Sans", sans-serif; text-anchor: middle; }
.za-t { fill: #2266dd; font: 700 26px "Liberation Sans", sans-serif; text-anchor: middle; }
.ln-t { fill: #53bb3b; font: 700 15px "Liberation Sans", sans-serif; text-anchor: middle; }
.sh-a { fill: #fff; font: 700 6px "Liberation Sans", sans-serif; text-anchor: middle; }
.sh-b { fill: #7a3b10; font: 700 10px "Liberation Sans", sans-serif; text-anchor: middle; }
.py-t { fill: #555; font: 400 10px "Liberation Sans", sans-serif; text-anchor: middle; }
```
